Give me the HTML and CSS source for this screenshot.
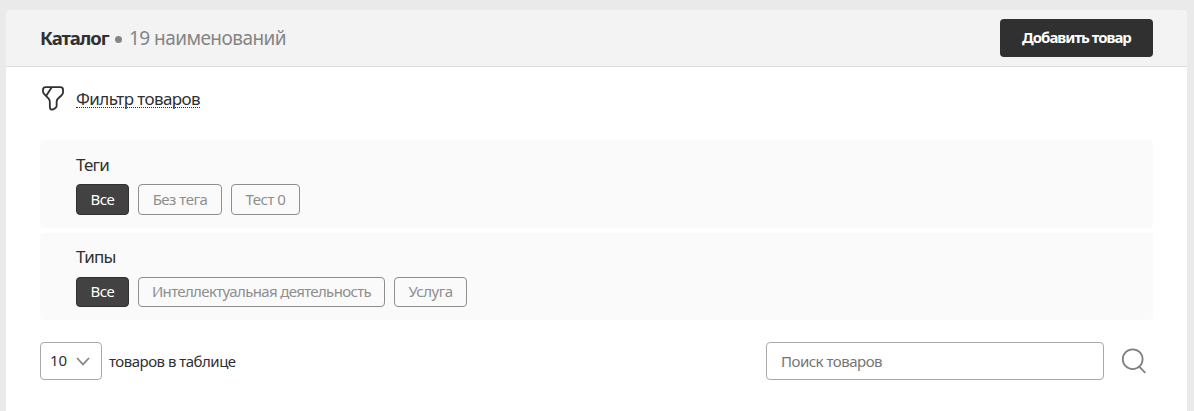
FILE: index.html
```html
<!DOCTYPE html>
<html lang="ru">

<head>
  <meta charset="UTF-8">
  <meta name="viewport" content="width=device-width, initial-scale=1.0">
  <title>Каталог</title>
  <link rel="stylesheet" href="styles.css">
</head>

<body>
  <div class="panel">
    <header class="panel-header">
      <h1 class="title"><b>Каталог</b><span class="dot"></span><span class="count">19 наименований</span></h1>
      <button class="add-btn" type="button"><span>Добавить товар</span></button>
    </header>

    <div class="panel-body">
      <div class="filter">
        <svg class="filter-icon" width="22" height="25" viewBox="1 0 23 26">
          <path d="M4.8 1.1H20.2Q23 1.1 23 4V6.4Q23 8.4 21.5 9.6L17.8 13Q16.3 14.4 16.3 16.4V20.6Q16.3 22.1 15 22.9L13.2 24.1Q9.4 25.8 9.2 22V16.6Q9.2 14.8 7.9 13.2L3.6 8.7Q2 7 2 5.4V4Q2 1.1 4.8 1.1Z" />
          <path d="M11 1.5L5.4 10" />
        </svg>
        <a class="filter-link">Фильтр товаров</a>
      </div>

      <section class="group">
        <h2 class="group-title">Теги</h2>
        <div class="chips">
          <button class="chip active all" type="button">Все</button>
          <button class="chip no-tag" type="button">Без тега</button>
          <button class="chip test" type="button">Тест 0</button>
        </div>
      </section>

      <section class="group types">
        <h2 class="group-title">Типы</h2>
        <div class="chips">
          <button class="chip active all" type="button">Все</button>
          <button class="chip intellect" type="button">Интеллектуальная деятельность</button>
          <button class="chip service" type="button">Услуга</button>
        </div>
      </section>

      <div class="toolbar">
        <div class="page-size">
          <span>10</span>
          <svg width="14" height="9" viewBox="0 0 14 9">
            <path d="M1 1L7 7.4L13 1" />
          </svg>
        </div>
        <span class="page-label">товаров в таблице</span>
        <input type="text" class="search" placeholder="Поиск товаров">
        <svg class="search-icon" width="26" height="26" viewBox="0 0 26 26">
          <circle cx="11.7" cy="11.2" r="9.9" />
          <path d="M18.2 18.6L24.3 24.8" />
        </svg>
      </div>
    </div>
  </div>
</body>

</html>
```
FILE: styles.css
```css
* {
  box-sizing: border-box;
}

body {
  margin: 0;
  padding: 10px 7px 0 6px;
  background: #eaeaea;
  color: #303030;
  font-family: "Noto Sans", sans-serif;
  font-size: 15px;
  overflow: hidden;
}

button,
input {
  font: inherit;
}

.panel {
  height: 401px;
  background: #fff;
  border-radius: 5px 5px 0 0;
  overflow: hidden;
}

.panel-header {
  display: flex;
  align-items: center;
  justify-content: space-between;
  height: 57px;
  padding: 0 34px;
  background: #f3f3f3;
  border-bottom: 1px solid #ddd;
}

.title {
  display: flex;
  align-items: center;
  margin: 0;
  font-size: 19px;
  line-height: 26px;
  font-weight: 400;
  white-space: nowrap;
}

.title b {
  width: 75px;
  font-size: 18.5px;
  letter-spacing: -1px;
}

.dot {
  width: 7px;
  height: 7px;
  margin: 2px 7px 0 0;
  border-radius: 50%;
  background: #858585;
}

.count {
  color: #858585;
  letter-spacing: -0.55px;
}

.add-btn {
  width: 153px;
  height: 38px;
  padding: 0 0 2px;
  border: 0;
  border-radius: 4px;
  background: #303030;
  color: #fff;
  font-weight: 700;
  letter-spacing: -1px;
}

.panel-body {
  padding: 19px 34px 0;
}

.filter {
  display: flex;
  align-items: flex-start;
  height: 54px;
}

.filter-icon {
  margin: 0 12px 0 2px;
  fill: none;
  stroke: #303030;
  stroke-width: 1.9;
}

.filter-link {
  height: 22px;
  border-bottom: 1px dotted #303030;
  font-size: 17px;
  line-height: 25px;
  letter-spacing: -0.58px;
  white-space: nowrap;
}

.group {
  height: 88px;
  margin-bottom: 5px;
  padding: 14px 36px 0;
  border-radius: 4px;
  background: #fafafa;
}

.group-title {
  margin: 0 0 8px;
  font-size: 17px;
  line-height: 22px;
  font-weight: 400;
  letter-spacing: -0.8px;
}

.chips {
  display: flex;
  gap: 9px;
}

.chip {
  height: 31px;
  padding: 0 0 2px;
  border: 1px solid #8e8e8e;
  border-radius: 4px;
  background: none;
  color: #8e8e8e;
  letter-spacing: -0.5px;
  white-space: nowrap;
}

.chip.active {
  border-color: #303030;
  background: #424242;
  color: #fff;
}

.all {
  width: 53px;
}

.no-tag {
  width: 84px;
}

.test {
  width: 69px;
}

.types {
  height: 87px;
  margin-bottom: 22px;
  padding-top: 13px;
}

.types .group-title {
  margin-bottom: 9px;
}

.types .chip {
  height: 30px;
}

.intellect {
  width: 247px;
  letter-spacing: -0.65px;
}

.service {
  width: 73px;
}

.toolbar {
  display: flex;
  align-items: center;
  height: 38px;
}

.page-size {
  display: flex;
  align-items: center;
  justify-content: space-between;
  width: 62px;
  height: 38px;
  padding: 0 11px 0 9px;
  border: 1px solid #a9a9a9;
  border-radius: 4px;
}

.page-size span {
  padding-bottom: 2px;
}

.page-size svg {
  fill: none;
  stroke: #858585;
  stroke-width: 1.7;
}

.page-label {
  margin-left: 7px;
  letter-spacing: -0.5px;
  white-space: nowrap;
}

.search {
  width: 338px;
  height: 38px;
  margin-left: auto;
  padding: 0 14px;
  border: 1px solid #a9a9a9;
  border-radius: 4px;
  background: #fff;
}

.search::placeholder {
  color: #757575;
  letter-spacing: -0.5px;
  opacity: 1;
}

.search-icon {
  margin: 0 6px 0 17px;
  fill: none;
  stroke: #808080;
  stroke-width: 1.8;
}
```
